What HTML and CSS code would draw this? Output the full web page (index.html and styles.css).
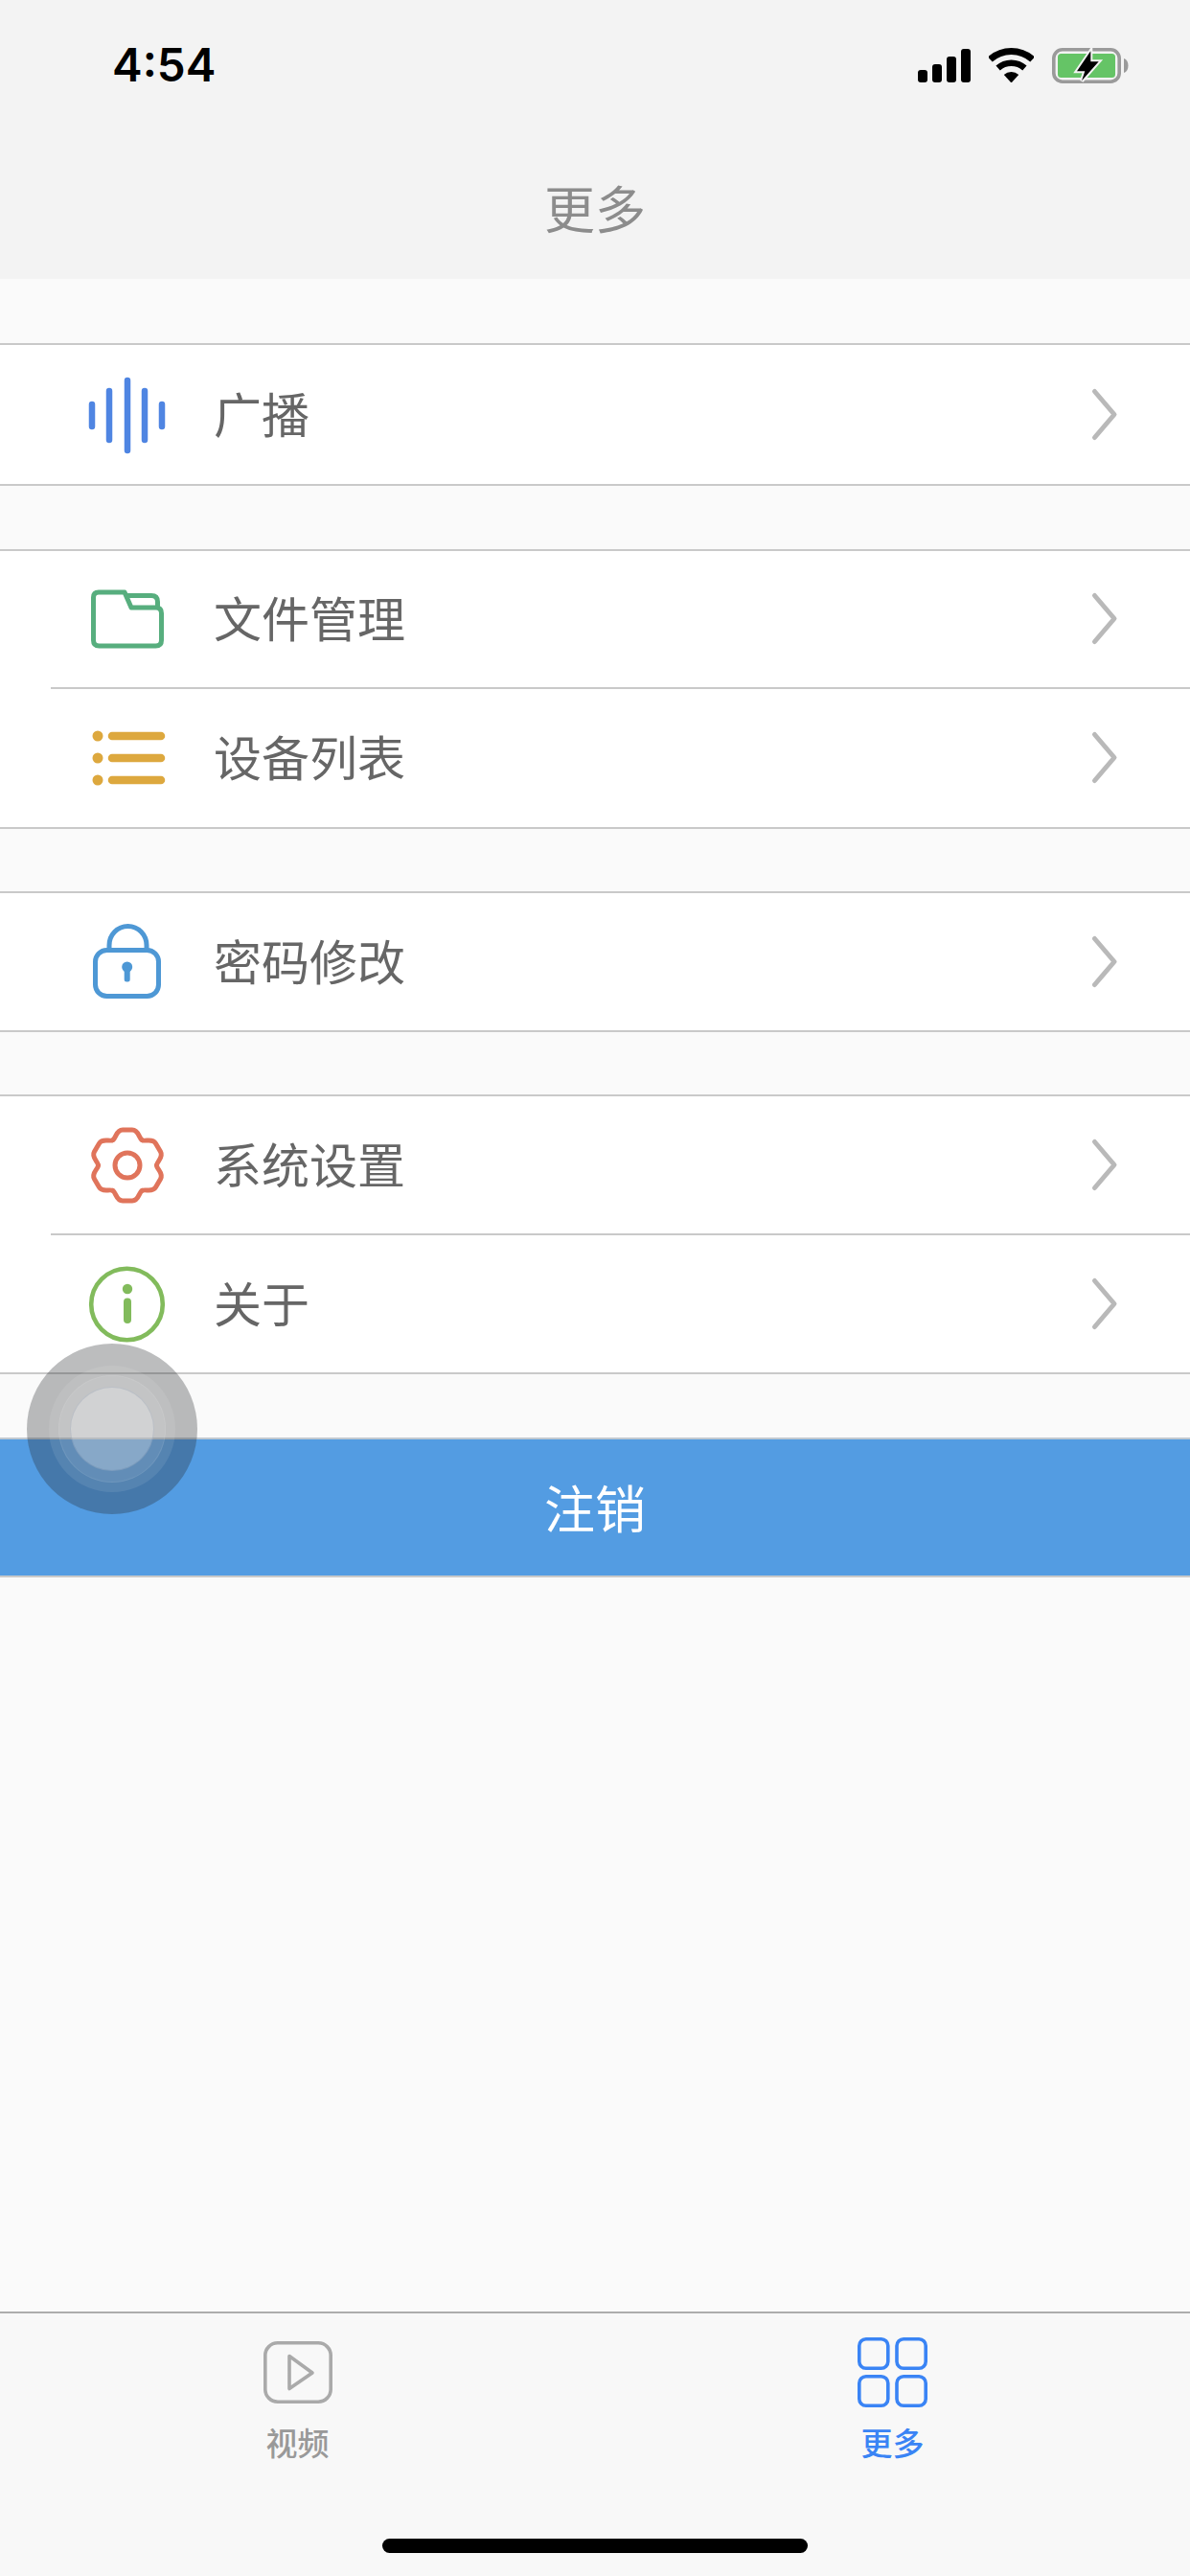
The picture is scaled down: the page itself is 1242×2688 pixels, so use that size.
FILE: index.html
```html
<!DOCTYPE html>
<html lang="zh-CN">
<head>
<meta charset="utf-8">
<title>更多</title>
<link rel="stylesheet" href="styles.css">
</head>
<body>
<div class="app">
  <header class="header">
    <div class="status">
      <span class="time">4:54</span>
      <div class="status-icons">
        <svg class="sig" viewBox="0 0 55 35"><rect x="0" y="22" width="10" height="13" rx="3"/><rect x="15" y="16" width="10" height="19" rx="3"/><rect x="30" y="8" width="10" height="27" rx="3"/><rect x="45" y="0" width="10" height="35" rx="3"/></svg>
        <svg class="wifi" viewBox="0 0 47 36"><path class="wifi-arc7" d="M1.4 12A33 33 0 0 1 45.6 12"/><path class="wifi-arc6" d="M9.6 21A20.8 20.8 0 0 1 37.4 21"/><path d="M23.5 36.5L15.8 28A11.5 11.5 0 0 1 31.2 28Z"/></svg>
        <svg class="batt" viewBox="0 0 80 37"><rect class="batt-body" x="1.8" y="1.8" width="68.4" height="33.4" rx="9"/><rect class="batt-fill" x="6" y="6" width="60" height="25" rx="3.5"/><path class="batt-nub" d="M75 11C78 12 79.5 15 79.5 18.5S78 25 75 26Z"/><path class="bolt-halo" d="M40.3 3.3L26 24.3H34.3L31 34.3L48.7 14.3H40.3Z"/><path d="M40.3 3.3L26 24.3H34.3L31 34.3L48.7 14.3H40.3Z"/></svg>
      </div>
    </div>
    <div class="nav">更多</div>
  </header>

  <main class="list">
    <section class="group">
      <div class="row row-tall">
        <svg class="icon icon-blue" viewBox="0 0 80 80"><path d="M3 29V52M21 15V66M40 4V77M58 15V66M76 29V52"/></svg>
        <span class="label">广播</span>
        <svg class="chev" viewBox="0 0 29 57"><path d="M4.5 4.5L25 28.5L4.5 52.5"/></svg>
      </div>
    </section>

    <section class="group">
      <div class="row row-short">
        <svg class="icon icon-green" viewBox="0 0 80 80"><path d="M10 12H37L44 28H70Q75.5 28 75.5 34V62Q75.5 68 69.5 68H10.5Q4.5 68 4.5 62V17.5Q4.5 12 10 12Z"/><path d="M38 15.5H65Q71.5 15.5 71.5 22V28"/></svg>
        <span class="label">文件管理</span>
        <svg class="chev" viewBox="0 0 29 57"><path d="M4.5 4.5L25 28.5L4.5 52.5"/></svg>
      </div>
      <div class="sep"></div>
      <div class="row row-long">
        <svg class="icon icon-yellow" viewBox="0 0 80 80"><circle cx="9" cy="17" r="5.5"/><circle cx="9" cy="40" r="5.5"/><circle cx="9" cy="63" r="5.5"/><path d="M24 17H75M24 40H75M24 63H75"/></svg>
        <span class="label">设备列表</span>
        <svg class="chev" viewBox="0 0 29 57"><path d="M4.5 4.5L25 28.5L4.5 52.5"/></svg>
      </div>
    </section>

    <section class="group">
      <div class="row row-mid">
        <svg class="icon icon-sky" viewBox="0 0 80 80"><rect x="6.5" y="28.5" width="66" height="48" rx="12"/><path d="M21 28V23.5A19.5 20 0 0 1 60 23.5V28"/><circle class="key" cx="39.7" cy="46" r="5.5"/><rect class="key" x="36.7" y="46" width="6" height="15.6" rx="2.5"/></svg>
        <span class="label">密码修改</span>
        <svg class="chev" viewBox="0 0 29 57"><path d="M4.5 4.5L25 28.5L4.5 52.5"/></svg>
      </div>
    </section>

    <section class="group">
      <div class="row">
        <svg class="icon icon-red" viewBox="0 0 80 80">
          <g transform="translate(40 40)">
            <path id="lobe" d="M-15.25 -26.4C-11.75 -28.4 -12 -37 -5 -37H5C12 -37 11.75 -28.4 15.25 -26.4"/>
            <use href="#lobe" transform="rotate(60)"/>
            <use href="#lobe" transform="rotate(120)"/>
            <use href="#lobe" transform="rotate(180)"/>
            <use href="#lobe" transform="rotate(240)"/>
            <use href="#lobe" transform="rotate(300)"/>
            <circle r="13"/>
          </g>
        </svg>
        <span class="label">系统设置</span>
        <svg class="chev" viewBox="0 0 29 57"><path d="M4.5 4.5L25 28.5L4.5 52.5"/></svg>
      </div>
      <div class="sep"></div>
      <div class="row">
        <svg class="icon icon-lime" viewBox="0 0 80 80"><circle cx="39.5" cy="40" r="37.3"/><circle class="dot" cx="40" cy="24" r="5.2"/><path class="stem" d="M40 37.5V56"/></svg>
        <span class="label">关于</span>
        <svg class="chev" viewBox="0 0 29 57"><path d="M4.5 4.5L25 28.5L4.5 52.5"/></svg>
      </div>
    </section>

    <div class="logout">注销</div>
  </main>

  <footer class="tabbar">
    <nav class="tabs">
      <div class="tab">
        <div class="tab-icon">
          <svg class="tab-play" viewBox="0 0 72 65"><rect x="1.8" y="1.8" width="68.4" height="61.4" rx="13"/><path d="M27 15.5L51 33L27 49.5Z"/></svg>
        </div>
        <span class="tab-label">视频</span>
      </div>
      <div class="tab tab-active">
        <div class="tab-icon">
          <svg class="tab-grid" viewBox="0 0 73 73"><rect x="1.8" y="1.8" width="30" height="30.5" rx="7"/><rect x="41" y="1.8" width="30.2" height="30.5" rx="7"/><rect x="1.8" y="40.8" width="30" height="30.4" rx="7"/><rect x="41" y="40.8" width="30.2" height="30.4" rx="7"/></svg>
        </div>
        <span class="tab-label">更多</span>
      </div>
    </nav>
    <div class="home-bar"></div>
  </footer>

  <div class="touch">
    <div class="touch-ring1">
      <div class="touch-ring2">
        <div class="touch-core"></div>
      </div>
    </div>
  </div>
</div>
</body>
</html>
```

FILE: styles.css
```css
* { box-sizing: border-box; }
html, body { margin: 0; padding: 0; }
body {
  width: 1242px;
  height: 2688px;
  overflow: hidden;
  background: #fafafa;
  font-family: "Noto Sans CJK SC", "Noto Sans", sans-serif;
}
.app {
  position: relative;
  width: 1242px;
  height: 2688px;
  display: flex;
  flex-direction: column;
}

/* header */
.header { height: 291px; background: #f3f3f3; flex: none; }
.status {
  height: 136px;
  display: flex;
  align-items: center;
  justify-content: space-between;
  padding: 0 64px 0 117px;
}
.time {
  font-family: Inter, "Liberation Sans", sans-serif;
  font-size: 47.5px;
  font-weight: 600;
  color: #000;
  line-height: 1;
}
.status-icons { display: flex; align-items: center; gap: 19px; }
.status-icons svg { display: block; }
.sig { width: 55px; height: 35px; }
.wifi { width: 47px; height: 36px; }
.batt { width: 80px; height: 37px; }
.wifi-arc7 { fill: none; stroke: #000; stroke-width: 7; }
.wifi-arc6 { fill: none; stroke: #000; stroke-width: 6.5; }
.batt-body { fill: none; stroke: #9a9a9a; stroke-width: 3.6; }
.batt-fill { fill: #65c466; }
.batt-nub { fill: #9a9a9a; }
.bolt-halo { fill: #f3f3f3; stroke: #f3f3f3; stroke-width: 4; }
.nav {
  height: 155px;
  padding-top: 5px;
  display: flex;
  align-items: center;
  justify-content: center;
  font-size: 53px;
  color: #8c8c8c;
  line-height: 1;
}

/* list */
.list { display: flex; flex-direction: column; gap: 65.5px; padding-top: 67px; }
.group {
  background: #fff;
  border-top: 2px solid #c9c9c9;
  border-bottom: 2px solid #c9c9c9;
}
.row {
  height: 143px;
  display: flex;
  align-items: center;
  padding: 0 75px 0 93px;
}
.row-tall { height: 145px; }
.row-short { height: 142px; }
.row-long { height: 144px; }
.row-mid { height: 142.5px; }
.sep { height: 2px; margin-left: 53px; background: #c9c9c9; }
.icon { width: 80px; height: 80px; flex: none; overflow: visible; }
.label {
  flex: 1;
  margin: 0 0 5px 50px;
  font-size: 50px;
  line-height: 1;
  color: #666;
}
.chev { width: 29px; height: 57px; flex: none; fill: none; stroke: #b9b9b9; stroke-width: 5; stroke-linecap: round; stroke-linejoin: round; }

.icon-blue { fill: none; stroke: #4f85e2; stroke-width: 6.5; stroke-linecap: round; }
.icon-green { fill: none; stroke: #57ae7e; stroke-width: 5; stroke-linejoin: round; }
.icon-yellow { fill: #dda83e; stroke: #dda83e; }
.icon-yellow circle { stroke: none; }
.icon-yellow path { fill: none; stroke-width: 8.5; stroke-linecap: round; }
.icon-sky { fill: none; stroke: #4e98d5; stroke-width: 5; }
.icon-sky .key { fill: #4e98d5; stroke: none; }
.icon-red { fill: none; stroke: #e0745b; stroke-width: 5; stroke-linecap: round; stroke-linejoin: round; }
.icon-lime { fill: none; stroke: #82bb5c; stroke-width: 4.6; }
.icon-lime .dot { fill: #82bb5c; stroke: none; }
.icon-lime .stem { stroke-width: 8; stroke-linecap: round; }

.logout {
  height: 146px;
  display: flex;
  align-items: center;
  justify-content: center;
  background: #539ce2;
  border-top: 2px solid #c0c8d0;
  border-bottom: 2px solid #c9c9c9;
  font-size: 53px;
  line-height: 1;
  color: #fff;
}

/* tab bar */
.tabbar {
  margin-top: auto;
  height: 276px;
  background: #f8f8f8;
  border-top: 2px solid #adadad;
  padding-top: 25px;
}
.tabs { display: flex; }
.tab { flex: 1; display: flex; flex-direction: column; align-items: center; }
.tab-icon { height: 73px; display: flex; align-items: center; justify-content: center; }
.tab-play { width: 72px; height: 65px; fill: none; stroke: #aaa; stroke-width: 3.6; stroke-linejoin: round; }
.tab-grid { width: 73px; height: 73px; fill: none; stroke: #3a84f5; stroke-width: 3.6; }
.tab-label {
  margin-top: 16px;
  font-size: 33px;
  line-height: 40px;
  font-weight: 500;
  color: #999;
}
.tab-active .tab-label { color: #3a84f5; }
.home-bar {
  width: 444px;
  height: 15px;
  margin: 81px auto 0;
  border-radius: 8px;
  background: #000;
}

/* floating assistive-touch button */
.touch {
  position: absolute;
  left: 28px;
  top: 1402px;
  width: 178px;
  height: 178px;
  border-radius: 50%;
  background: rgba(40, 42, 46, .31);
  display: flex;
  align-items: center;
  justify-content: center;
}
.touch-ring1 {
  width: 132px;
  height: 132px;
  border-radius: 50%;
  background: rgba(255, 255, 255, .09);
  display: flex;
  align-items: center;
  justify-content: center;
}
.touch-ring2 {
  width: 112px;
  height: 112px;
  border-radius: 50%;
  background: rgba(255, 255, 255, .08);
  border: 1px solid rgba(255, 255, 255, .08);
  display: flex;
  align-items: center;
  justify-content: center;
}
.touch-core {
  width: 88px;
  height: 88px;
  border-radius: 50%;
  background: rgba(255, 255, 255, .24);
  border: 1px solid rgba(60, 90, 130, .15);
}
```
